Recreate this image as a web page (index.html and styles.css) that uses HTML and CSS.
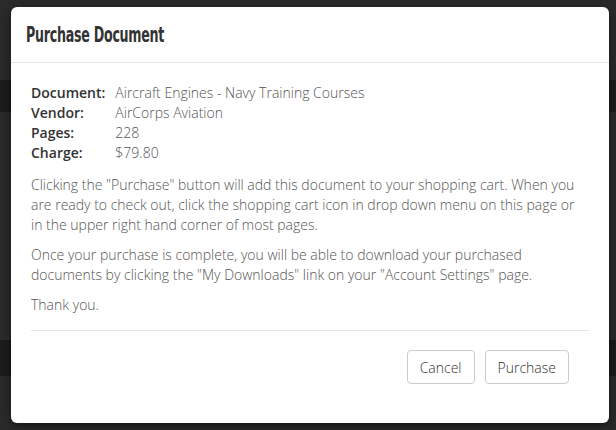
FILE: index.html
```html
<!DOCTYPE html>
<html>
<head>
<meta charset="utf-8">
<link rel="stylesheet" href="styles.css">
</head>
<body>
<div class="backdrop">
  <div class="band band-top"></div>
  <div class="band band-bottom"></div>
  <div class="modal">
    <div class="modal-header">
      <h4 class="modal-title">Purchase Document</h4>
    </div>
    <div class="modal-body">
      <table class="info">
        <tr><th>Document:</th><td>Aircraft Engines - Navy Training Courses</td></tr>
        <tr><th>Vendor:</th><td>AirCorps Aviation</td></tr>
        <tr><th>Pages:</th><td>228</td></tr>
        <tr><th>Charge:</th><td>$79.80</td></tr>
      </table>
      <p>Clicking the "Purchase" button will add this document to your shopping cart. When you are ready to check out, click the shopping cart icon in drop down menu on this page or in the upper right hand corner of most pages.</p>
      <p>Once your purchase is complete, you will be able to download your purchased documents by clicking the "My Downloads" link on your "Account Settings" page.</p>
      <p>Thank you.</p>
      <hr class="rule">
      <div class="modal-footer">
        <button class="btn">Cancel</button>
        <button class="btn">Purchase</button>
      </div>
    </div>
  </div>
</div>
</body>
</html>
```

FILE: styles.css
```css
html, body {
  margin: 0;
  padding: 0;
  width: 616px;
  height: 430px;
  overflow: hidden;
  background: #2a2a2a;
}
.backdrop {
  position: relative;
  width: 616px;
  height: 430px;
  padding-top: 7px;
  box-sizing: border-box;
}
.band {
  position: absolute;
  left: 0;
  right: 0;
  background: #1b1b1b;
}
.band-top { top: 80px; height: 32px; }
.band-bottom { top: 340px; height: 36px; }
.modal {
  position: relative;
  margin-left: 11px;
  width: 598px;
  height: 416px;
  background: #fff;
  border-radius: 6px;
  box-shadow: 0 3px 9px rgba(0,0,0,0.5);
  font-family: "Open Sans", "Noto Sans", sans-serif;
  color: #555;
}
.modal-header {
  height: 55px;
  border-bottom: 1px solid #e5e5e5;
  padding: 0 15px;
  display: flex;
  align-items: center;
}
.modal-title {
  margin: 0;
  font-family: "DejaVu Sans Condensed", "DejaVu Sans", sans-serif;
  font-stretch: condensed;
  font-weight: bold;
  font-size: 21px;
  color: #333;
  letter-spacing: -0.4px;
  transform: scaleX(0.67);
  transform-origin: left center;
  white-space: nowrap;
}
.modal-body {
  padding: 20px 20px 0 20px;
  font-size: 14px;
  line-height: 20px;
  font-weight: 300;
}
.info {
  border-collapse: collapse;
  margin-bottom: 12px;
}
.info th {
  text-align: left;
  font-weight: 600;
  color: #333;
  padding: 0 10px 0 0;
}
.info td { padding: 0; }
p {
  margin: 0 0 10px 0;
}
.rule {
  border: 0;
  border-top: 1px solid #e5e5e5;
  margin: 15px 0 0 0;
}
.modal-footer {
  display: flex;
  justify-content: flex-end;
  gap: 10px;
  padding: 19px 20px 0 0;
}
.btn {
  font-family: "Open Sans", "Noto Sans", sans-serif;
  font-weight: 300;
  font-size: 14px;
  color: #333;
  background: #fff;
  border: 1px solid #ccc;
  border-radius: 4px;
  height: 34px;
  padding: 0 12px;
}
```
